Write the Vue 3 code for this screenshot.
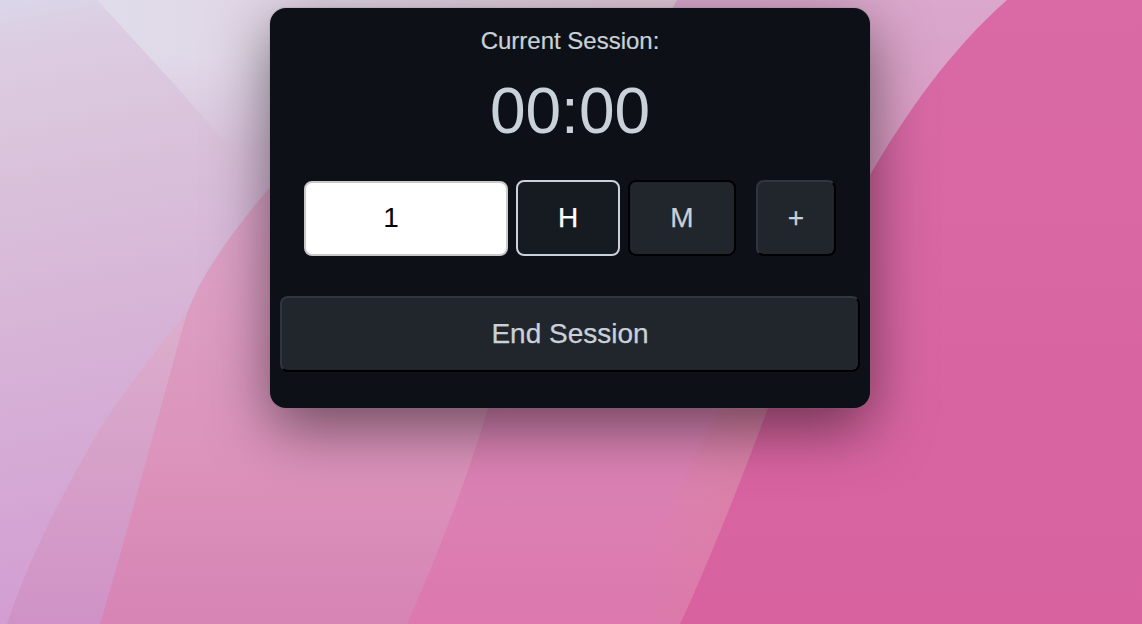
<script setup>
const controls = [
  { label: 'H', kind: 'active' },
  { label: 'M', kind: 'plain' },
]
</script>

<template>
  <div class="page">
    <svg class="wallpaper" viewBox="0 0 1142 624" preserveAspectRatio="none" aria-hidden="true">
      <defs>
        <linearGradient id="base" gradientUnits="userSpaceOnUse" x1="0" y1="0" x2="120" y2="624">
          <stop offset="0" stop-color="#dad7ea" />
          <stop offset="0.07" stop-color="#dccde2" />
          <stop offset="0.3" stop-color="#d9c0da" />
          <stop offset="0.6" stop-color="#d6b0d6" />
          <stop offset="1" stop-color="#d29cd2" />
        </linearGradient>
        <linearGradient id="light" gradientUnits="userSpaceOnUse" x1="100" y1="0" x2="700" y2="0">
          <stop offset="0" stop-color="#dfdcea" />
          <stop offset="0.3" stop-color="#e2d6e6" />
          <stop offset="1" stop-color="#e0c6d6" />
        </linearGradient>
        <linearGradient id="fadeDown" x1="0" y1="0" x2="0" y2="1">
          <stop offset="0" stop-color="#fff" />
          <stop offset="0.35" stop-color="#fff" />
          <stop offset="1" stop-color="#000" />
        </linearGradient>
        <mask id="wedgeMask" maskUnits="userSpaceOnUse" x="0" y="0" width="1142" height="150">
          <rect width="1142" height="150" fill="url(#fadeDown)" />
        </mask>
        <linearGradient id="layerB" gradientUnits="userSpaceOnUse" x1="0" y1="310" x2="0" y2="624">
          <stop offset="0" stop-color="#dcaecc" />
          <stop offset="1" stop-color="#d092c6" />
        </linearGradient>
        <linearGradient id="layerC" gradientUnits="userSpaceOnUse" x1="0" y1="187" x2="0" y2="624">
          <stop offset="0" stop-color="#dca4c8" />
          <stop offset="0.6" stop-color="#dc94bc" />
          <stop offset="1" stop-color="#d684b4" />
        </linearGradient>
        <linearGradient id="layerD" gradientUnits="userSpaceOnUse" x1="0" y1="0" x2="0" y2="624">
          <stop offset="0" stop-color="#daa8cc" />
          <stop offset="0.6" stop-color="#db88b8" />
          <stop offset="1" stop-color="#dc78ae" />
        </linearGradient>
        <linearGradient id="layerE" x1="0" y1="0" x2="0" y2="1">
          <stop offset="0" stop-color="#d96aa6" />
          <stop offset="1" stop-color="#d7629f" />
        </linearGradient>
        <linearGradient id="band" gradientUnits="userSpaceOnUse" x1="640" y1="0" x2="745" y2="0">
          <stop offset="0" stop-color="#da8098" stop-opacity="0" />
          <stop offset="1" stop-color="#da8098" stop-opacity="0.45" />
        </linearGradient>
      </defs>
      <rect width="1142" height="624" fill="url(#base)" />
      <path
        d="M97 0 L175 85 L232 150 L700 150 L700 0 Z"
        fill="url(#light)"
        mask="url(#wedgeMask)"
      />
      <path d="M7 624 C30 555 60 500 93 440 C120 395 160 345 187 312 L420 312 L420 624 Z" fill="url(#layerB)" />
      <path d="M100 624 C125 540 160 410 185 320 C195 285 225 240 270 187 L500 100 L500 624 Z" fill="url(#layerC)" />
      <path d="M407 624 C440 550 470 470 488 408 C540 250 610 120 677 0 L1142 0 L1142 624 Z" fill="url(#layerD)" />
      <path d="M620 624 C660 520 700 450 720 408 L768 408 C745 470 710 560 680 624 Z" fill="url(#band)" />
      <path d="M680 624 C710 560 745 470 768 408 C800 320 835 240 870 175 C905 115 950 50 1007 0 L1142 0 L1142 624 Z" fill="url(#layerE)" />
    </svg>

    <section class="card">
      <h1 class="title">Current Session:</h1>
      <div class="timer">00:00</div>
      <div class="row">
        <input class="amount" type="text" value="1" aria-label="Amount" />
        <button
          v-for="c in controls"
          :key="c.label"
          type="button"
          class="unit"
          :class="c.kind"
        >{{ c.label }}</button>
        <button type="button" class="add">+</button>
      </div>
      <button type="button" class="end">End Session</button>
    </section>
  </div>
</template>

<style>
html, body { margin: 0; }
</style>

<style scoped>
.page {
  position: relative;
  width: 1142px;
  height: 624px;
  overflow: hidden;
  padding-top: 8px;
  box-sizing: border-box;
  font-family: "Liberation Sans", Arial, sans-serif;
}
.wallpaper {
  position: absolute;
  left: 0;
  top: 0;
  width: 1142px;
  height: 624px;
}
.card {
  position: relative;
  box-sizing: border-box;
  width: 600px;
  height: 400px;
  margin-left: 270px;
  padding: 16px 10px 0;
  background: #0d1117;
  border-radius: 16px;
  box-shadow: 0 0 0 1px rgba(120, 120, 120, 0.18), 0 20px 60px rgba(0, 0, 0, 0.5);
  display: flex;
  flex-direction: column;
  align-items: stretch;
}
.title {
  margin: 0;
  font-size: 24px;
  font-weight: 400;
  line-height: 34px;
  text-align: center;
  color: #c9d1d9;
  -webkit-text-stroke: 0.2px currentColor;
}
.timer {
  margin-top: 16px;
  font-size: 64px;
  line-height: 74px;
  text-align: center;
  color: #c9d1d9;
}
.row {
  margin-top: 32px;
  padding-left: 24px;
  display: flex;
  align-items: center;
  gap: 8px;
}
button {
  box-sizing: border-box;
  font-family: inherit;
  padding: 0;
  border-radius: 8px;
  border-style: solid;
  border-width: 2px;
  -webkit-text-stroke: 0.25px currentColor;
}
.amount {
  box-sizing: border-box;
  width: 204px;
  height: 75px;
  padding: 0 30px 0 0;
  border: 2px solid #c9c9c9;
  border-radius: 8px;
  background: #fff;
  color: #000;
  font-family: inherit;
  font-size: 28px;
  text-align: center;
  outline: none;
}
.unit {
  height: 76px;
  font-size: 28px;
}
.active {
  width: 104px;
  background: #161b22;
  border-color: #c9d1d9;
  color: #fff;
}
.plain {
  width: 108px;
  background: #21262d;
  border-color: #000;
  color: #c9d1d9;
}
.add {
  width: 80px;
  height: 76px;
  margin-left: 12px;
  background: #21262d;
  border-color: #30363d #000 #000 #30363d;
  color: #c9d1d9;
  font-size: 28px;
}
.end {
  margin-top: 40px;
  width: 580px;
  height: 76px;
  background: #21262d;
  border-color: #30363d #000 #000 #30363d;
  color: #c9d1d9;
  font-size: 28px;
}
</style>
